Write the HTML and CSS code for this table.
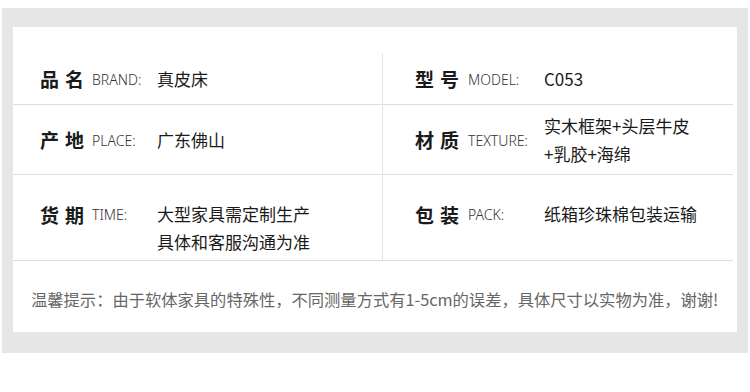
FILE: index.html
```html
<!DOCTYPE html>
<html lang="zh-CN">
<head>
<meta charset="utf-8">
<title>商品参数</title>
<link rel="stylesheet" href="styles.css">
</head>
<body>
<div class="panel">
  <div class="card">
    <div class="table">
      <div class="cell left r1">
        <div class="key"><span class="zh">品名</span><span class="en">BRAND:</span></div>
        <div class="val">真皮床</div>
      </div>
      <div class="cell right r1">
        <div class="key"><span class="zh">型号</span><span class="en">MODEL:</span></div>
        <div class="val">C053</div>
      </div>
      <div class="cell left r2">
        <div class="key"><span class="zh">产地</span><span class="en">PLACE:</span></div>
        <div class="val">广东佛山</div>
      </div>
      <div class="cell right r2">
        <div class="key"><span class="zh">材质</span><span class="en">TEXTURE:</span></div>
        <div class="val">实木框架+头层牛皮<br>+乳胶+海绵</div>
      </div>
      <div class="cell left r3">
        <div class="key"><span class="zh">货期</span><span class="en">TIME:</span></div>
        <div class="val">大型家具需定制生产<br>具体和客服沟通为准</div>
      </div>
      <div class="cell right r3">
        <div class="key"><span class="zh">包装</span><span class="en">PACK:</span></div>
        <div class="val">纸箱珍珠棉包装运输</div>
      </div>
    </div>
    <p class="note">温馨提示：由于软体家具的特殊性，不同测量方式有1-5cm的误差，具体尺寸以实物为准，谢谢!</p>
  </div>
</div>
</body>
</html>
```
FILE: styles.css
```css
html, body {
  margin: 0;
  padding: 0;
  background: #ffffff;
}

body {
  width: 750px;
  height: 392px;
  overflow: hidden;
  font-family: "Noto Sans CJK SC", "Noto Sans", sans-serif;
}

.panel {
  margin: 8px 0 0 2px;
  width: 746px;
  height: 345px;
  box-sizing: border-box;
  background: #e6e6e6;
  padding: 19px 11px 21px 11px;
}

.card {
  background: #ffffff;
  height: 305px;
  box-sizing: border-box;
  padding: 26px 4px 0 0;
  display: flex;
  flex-direction: column;
}

.table {
  display: grid;
  grid-template-columns: 369px 1fr;
  grid-template-rows: 52px 70px 86px;
}

.cell {
  display: flex;
  align-items: center;
  box-sizing: border-box;
  border-bottom: 1px solid #dedede;
}

.cell.left {
  padding-left: 27px;
}

.cell.right {
  padding-left: 32px;
  border-left: 1px solid #e2e2e2;
}

.cell.r3 {
  align-items: flex-start;
  padding-top: 25px;
}

.key {
  display: flex;
  align-items: center;
  flex: none;
  height: 28px;
}

.left .key {
  width: 117px;
}

.right .key {
  width: 129px;
}

.zh {
  font-size: 19px;
  font-weight: 700;
  letter-spacing: 6px;
  color: #1a1a1a;
  width: 52px;
  flex: none;
}

.right .zh {
  width: 53px;
}

.en {
  font-family: "Noto Sans", "Noto Sans CJK SC", sans-serif;
  font-size: 14px;
  font-weight: 300;
  color: #333333;
  padding-top: 1px;
}

.val {
  font-size: 17px;
  line-height: 28px;
  color: #1a1a1a;
}

.r2.right .val {
  line-height: 27.5px;
}

.note {
  margin: 0;
  padding: 26px 0 0 18px;
  font-size: 16.3px;
  line-height: 24px;
  color: #666666;
  white-space: nowrap;
}
```
